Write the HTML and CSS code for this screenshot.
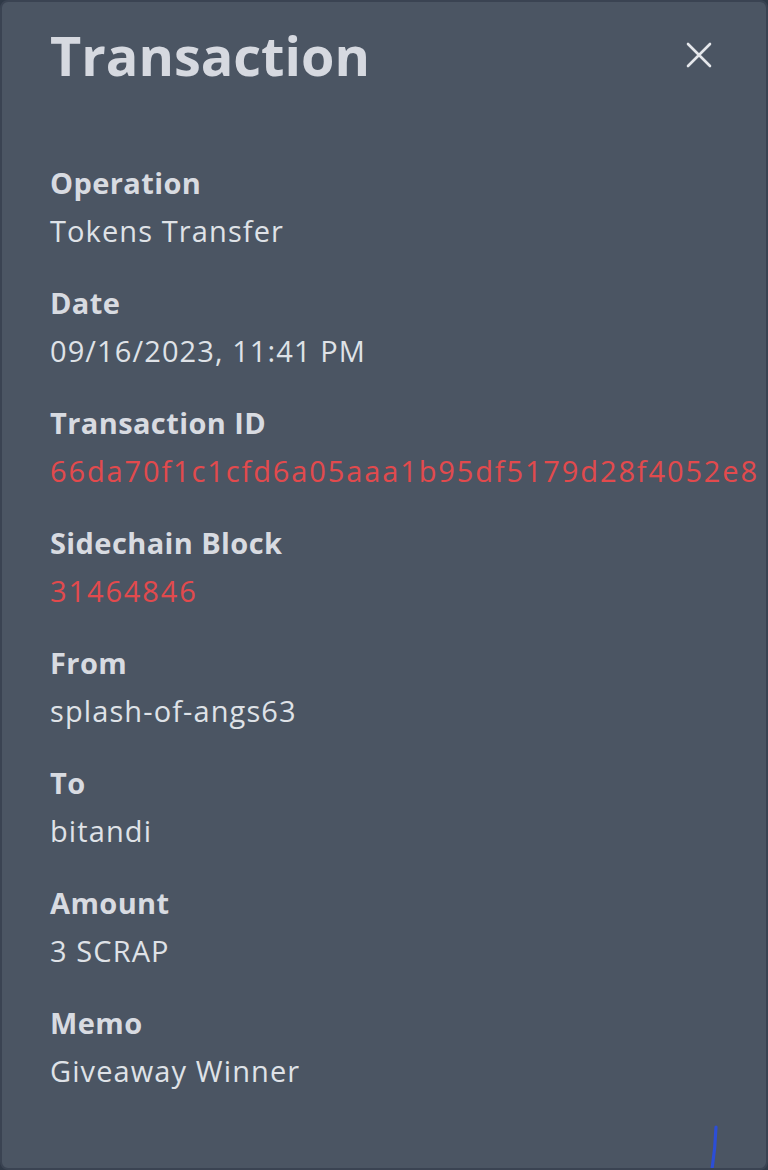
FILE: index.html
```html
<!DOCTYPE html>
<html lang="en">
<head>
<meta charset="utf-8">
<link rel="stylesheet" href="styles.css">
</head>
<body>
<div class="modal">
  <header class="head">
    <h1 class="title">Transaction</h1>
    <button class="close" aria-label="Close">
      <svg width="26" height="26" viewBox="0 0 26 26"><path d="M2 2L24 24M24 2L2 24" stroke="#e5e7eb" stroke-width="2.6" stroke-linecap="round"/></svg>
    </button>
  </header>
  <dl class="fields">
    <div class="field"><dt>Operation</dt><dd>Tokens Transfer</dd></div>
    <div class="field"><dt>Date</dt><dd>09/16/2023, 11:41 PM</dd></div>
    <div class="field"><dt>Transaction ID</dt><dd class="link hash">66da70f1c1cfd6a05aaa1b95df5179d28f4052e8</dd></div>
    <div class="field"><dt>Sidechain Block</dt><dd class="link hash">31464846</dd></div>
    <div class="field"><dt>From</dt><dd>splash-of-angs63</dd></div>
    <div class="field"><dt>To</dt><dd>bitandi</dd></div>
    <div class="field"><dt>Amount</dt><dd>3 SCRAP</dd></div>
    <div class="field"><dt>Memo</dt><dd>Giveaway Winner</dd></div>
  </dl>
  <svg class="stroke" width="14" height="52" viewBox="0 0 14 52"><path d="M10 3C9.5 18 8 34 5 51" stroke="#2c4ed6" stroke-width="3.2" fill="none" stroke-linecap="round"/></svg>
</div>
</body>
</html>
```
FILE: styles.css
```css
html, body {
  margin: 0;
  padding: 0;
  background: #2f3947;
}
body {
  width: 768px;
  height: 1170px;
  overflow: hidden;
  font-family: "Open Sans", "Noto Sans", sans-serif;
}
.modal {
  position: relative;
  box-sizing: border-box;
  width: 768px;
  height: 1170px;
  background: #4b5563;
  border: 2px solid #3a4352;
  border-radius: 8px;
  padding: 0 0 0 48px;
  overflow: hidden;
}
.head {
  display: flex;
  align-items: center;
  justify-content: space-between;
  height: 112px;
  padding-right: 54px;
}
.title {
  margin: 0;
  font-size: 54px;
  font-weight: 700;
  color: #d6d9e0;
  line-height: 1;
  margin-top: -6px;
}
.close {
  background: none;
  border: 0;
  padding: 0;
  display: flex;
  margin-top: -6px;
}
.fields {
  margin: 0;
  padding-top: 45px;
  display: flex;
  flex-direction: column;
  gap: 24px;
}
.field dt {
  font-size: 29px;
  font-weight: 700;
  color: #d8dbe1;
  line-height: 48px;
  letter-spacing: 0.4px;
}
.field dd {
  margin: 0;
  font-size: 29px;
  font-weight: 400;
  color: #dfe2e7;
  line-height: 48px;
  white-space: nowrap;
  letter-spacing: 1.1px;
}
.field dd.link {
  color: #e24a4d;
}
.field dd.hash {
  letter-spacing: 1.88px;
}
.stroke {
  position: absolute;
  left: 704px;
  top: 1122px;
}
```
